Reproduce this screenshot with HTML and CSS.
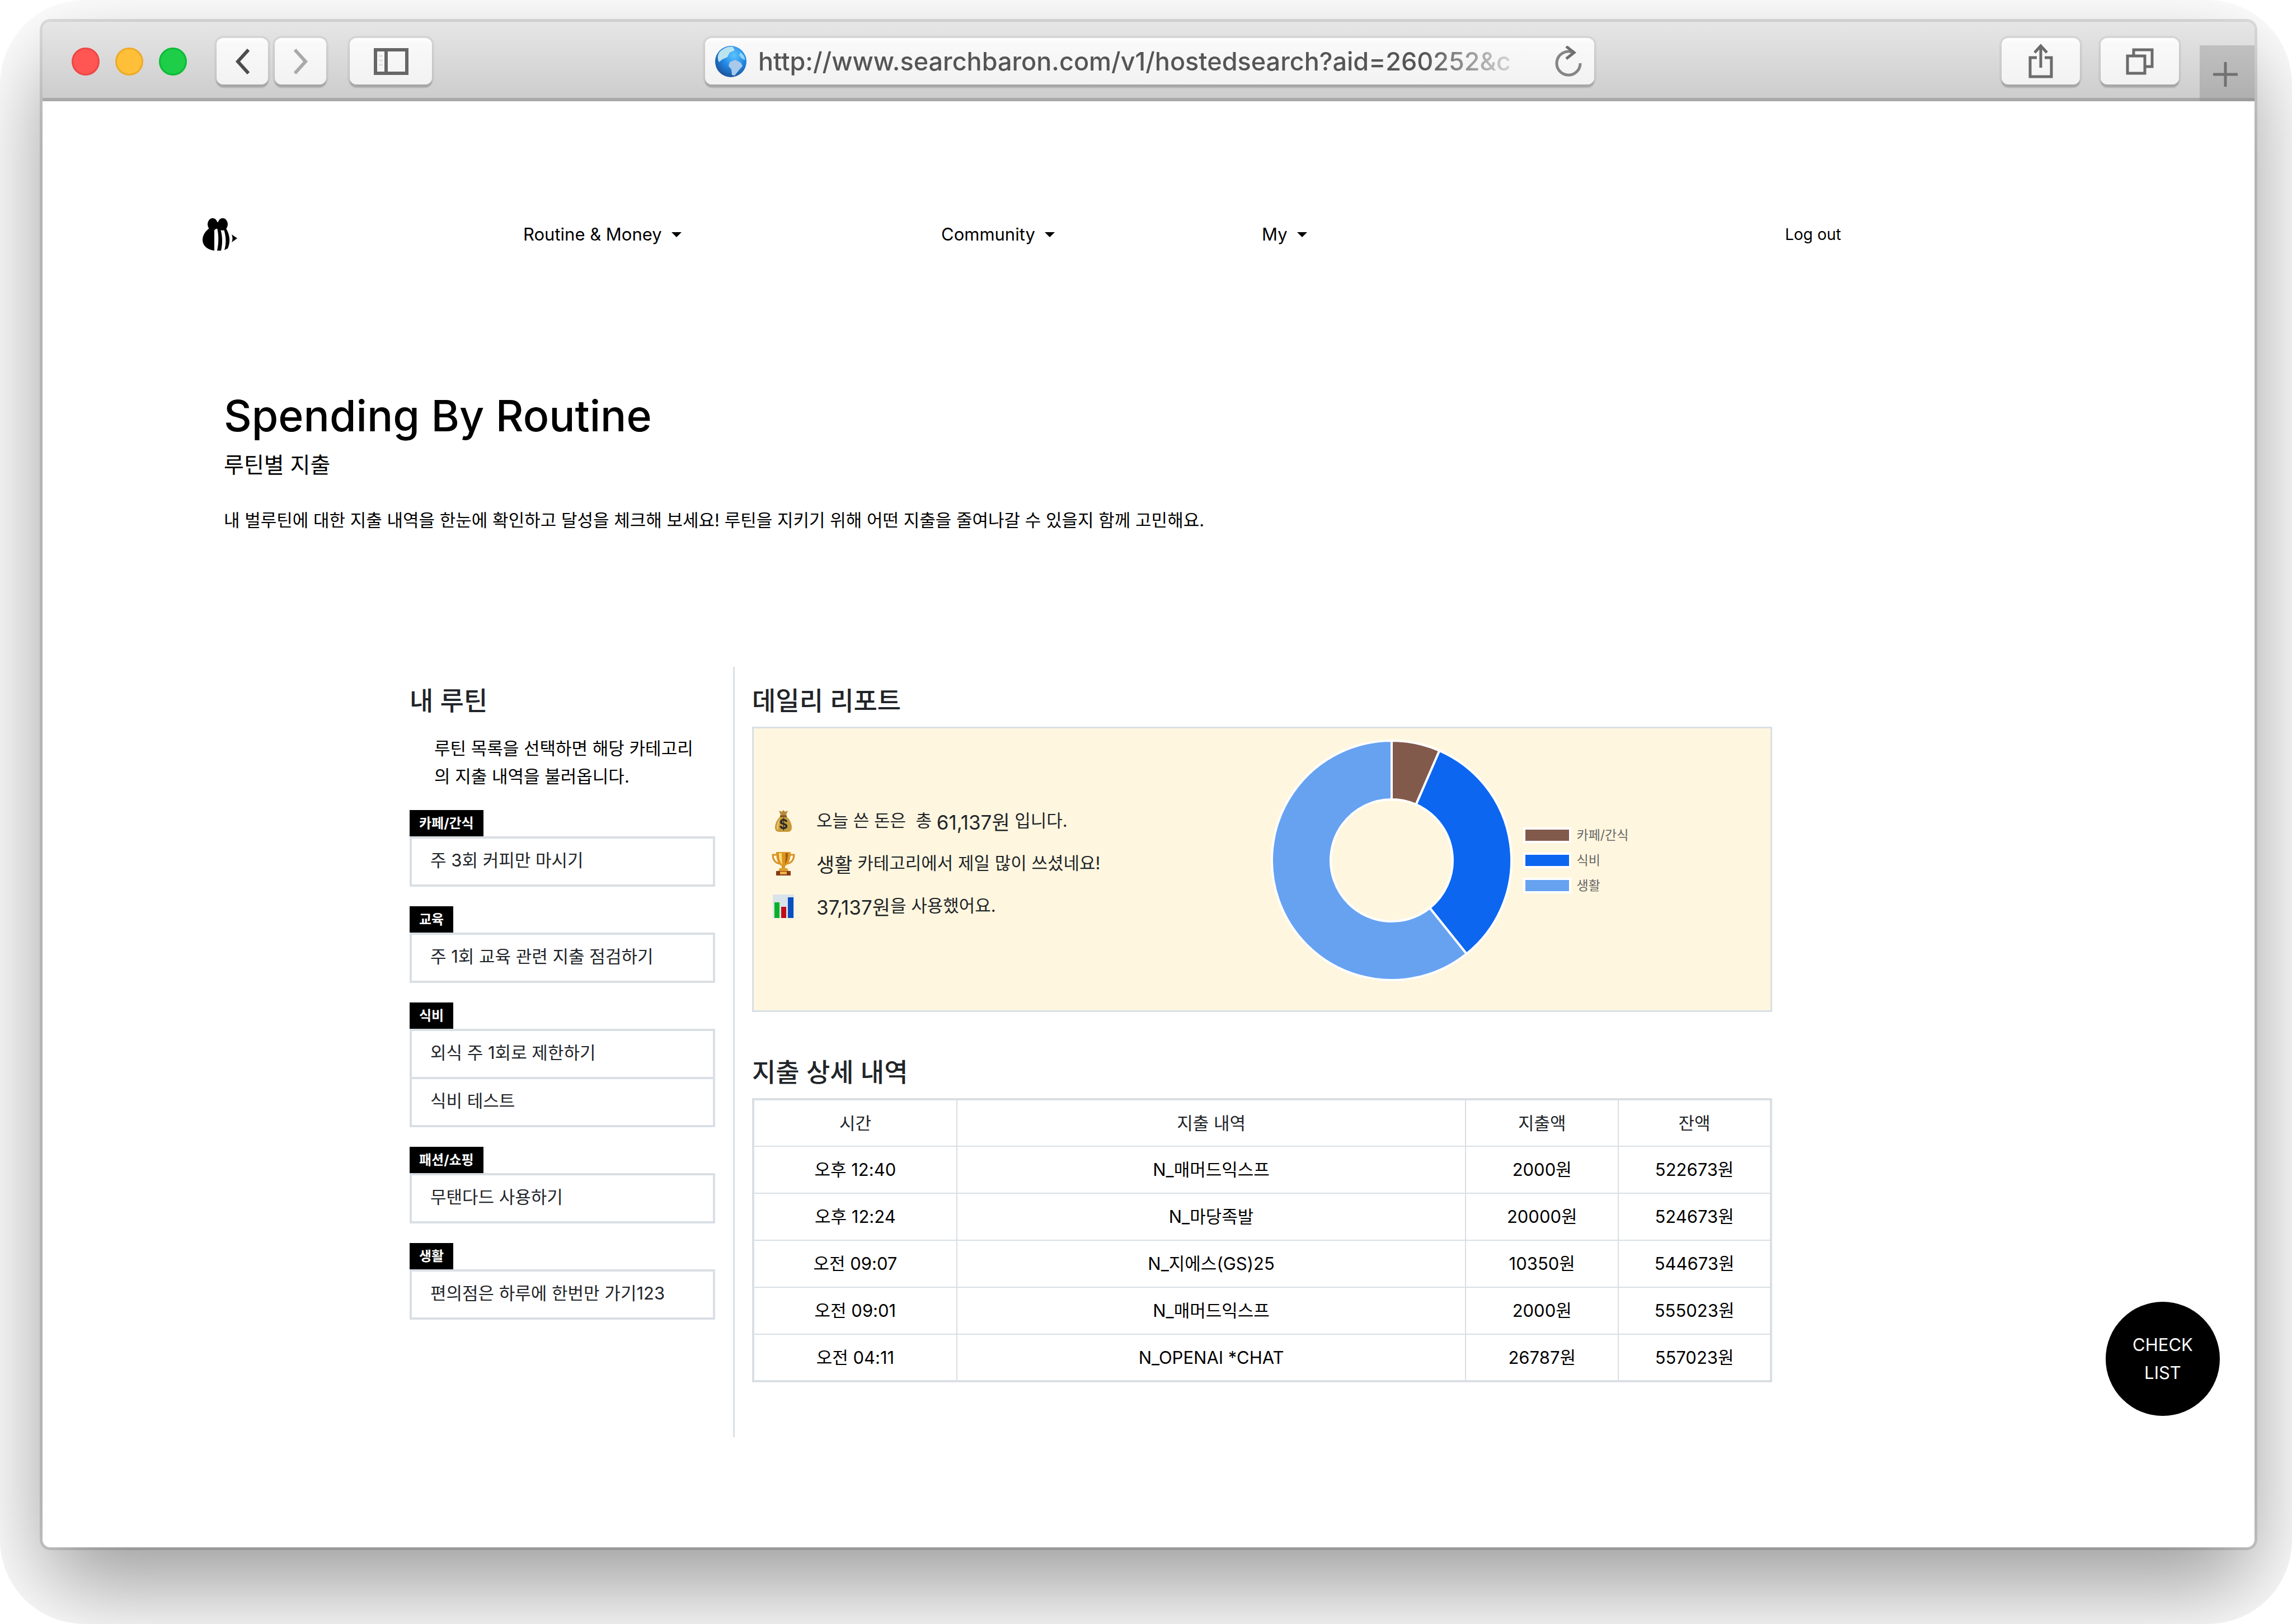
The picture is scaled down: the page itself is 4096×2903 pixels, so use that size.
FILE: index.html
```html
<!DOCTYPE html>
<html lang="ko">
<head>
<meta charset="utf-8">
<title>Spending By Routine</title>
<link rel="stylesheet" href="styles.css">
</head>
<body>
<div class="desktop">
<div class="window">
  <header class="toolbar">
    <div class="toolbar-left">
      <div class="lights">
        <span class="light light-close"></span>
        <span class="light light-min"></span>
        <span class="light light-max"></span>
      </div>
      <div class="history">
        <button class="tool tool-narrow" aria-label="Back"><svg width="29" height="48" viewBox="0 0 29 48"><path d="M25 3 6 24l19 21" fill="none" stroke="#4c4c4c" stroke-width="6"/></svg></button>
        <button class="tool tool-narrow" aria-label="Forward"><svg width="29" height="48" viewBox="0 0 29 48"><path d="M4 3l19 21L4 45" fill="none" stroke="#a9a9a9" stroke-width="6"/></svg></button>
      </div>
      <button class="tool tool-sidebar" aria-label="Sidebar"><svg width="62" height="48" viewBox="0 0 62 48"><path d="M3 3h56v42H3zM22 3v42" fill="none" stroke="#666" stroke-width="6"/><path d="M9 14h7M9 22h7M9 30h7" stroke="#ddd" stroke-width="3"/></svg></button>
    </div>
    <div class="address">
      <svg class="globe" width="58" height="58" viewBox="0 0 58 58">
        <defs><radialGradient id="sea" cx=".6" cy=".3" r=".75"><stop offset="0" stop-color="#5cc4ff"/><stop offset=".5" stop-color="#2389e6"/><stop offset="1" stop-color="#1c4f95"/></radialGradient></defs>
        <circle cx="29" cy="29" r="28" fill="url(#sea)"/>
        <path d="M9 12C16 4 27 1 33 3l3 6-9 4-4 8-9 4-6 5c-3-6-3-12 1-18z" fill="#b9e4ee"/>
        <path d="M27 30l10-4 10 5 3 6-7 8-7 9-5-1-1-10-5-6z" fill="#a9c9ea"/>
        <path d="M46 12l6 6 3 8-6-2-5-6z" fill="#8ed6f5"/>
      </svg>
      <input class="url" type="text" aria-label="Address" value="http://www.searchbaron.com/v1/hostedsearch?aid=260252&amp;c">
      <button class="reload" aria-label="Reload"><svg width="50" height="56" viewBox="0 0 50 56"><path d="M30 11A21 21 0 1 0 45 31" fill="none" stroke="#858585" stroke-width="5"/><path d="M20 1l14 11-14 11" fill="none" stroke="#6e6e6e" stroke-width="5"/></svg></button>
    </div>
    <div class="toolbar-right">
      <button class="tool tool-wide" aria-label="Share"><svg width="46" height="66" viewBox="0 0 46 66"><path d="M16 26H4v34h38V26H30" fill="none" stroke="#6b6b6b" stroke-width="5"/><path d="M23 44V6M12 17 23 5l11 12" fill="none" stroke="#6b6b6b" stroke-width="5"/></svg></button>
      <button class="tool tool-wide" aria-label="Tabs"><svg width="50" height="48" viewBox="0 0 50 48"><path d="M3 14h31v31H3zM14 14V3h33v30H34" fill="none" stroke="#6b6b6b" stroke-width="5"/></svg></button>
      <button class="new-tab" aria-label="New tab"><svg width="44" height="44" viewBox="0 0 44 44"><path d="M22 0v44M0 22h44" stroke="#717171" stroke-width="5"/></svg></button>
    </div>
  </header>

  <div class="page">
    <nav class="nav">
      <a class="logo" href="#" aria-label="Home"><svg width="64" height="60" viewBox="0 0 64 60">
        <ellipse cx="19" cy="12" rx="9" ry="11"/><ellipse cx="37" cy="12" rx="9" ry="11"/>
        <path d="M19 8h18l7 12H12z"/>
        <path d="M12 18h10v41C8 57 1 49 1 40 1 32 6 24 12 20z"/>
        <path d="M27 18h5c5 13 5 29 2 41h-7c3-13 3-28 0-41z"/>
        <path d="M38 18l6 3c6 11 7 23 2 34l-6 3c4-13 3-26-2-40z"/>
        <path d="M53 30l10 7-10 7c2-5 2-9 0-14z"/>
      </svg></a>
      <a class="nav-link" href="#">Routine &amp; Money<span class="caret"></span></a>
      <a class="nav-link" href="#">Community<span class="caret"></span></a>
      <a class="nav-link" href="#">My<span class="caret"></span></a>
      <a class="logout" href="#">Log out</a>
    </nav>

    <section class="intro">
      <h1>Spending By Routine</h1>
      <p class="subtitle">루틴별 지출</p>
      <p class="lead">내 벌루틴에 대한 지출 내역을 한눈에 확인하고 달성을 체크해 보세요! 루틴을 지키기 위해 어떤 지출을 줄여나갈 수 있을지 함께 고민해요.</p>
    </section>

    <main class="columns">
      <aside class="routines">
        <h2>내 루틴</h2>
        <p class="hint">루틴 목록을 선택하면 해당 카테고리의 지출 내역을 불러옵니다.</p>
        <section class="group"><h3>카페/간식</h3><ul><li>주 3회 커피만 마시기</li></ul></section>
        <section class="group"><h3>교육</h3><ul><li>주 1회 교육 관련 지출 점검하기</li></ul></section>
        <section class="group"><h3>식비</h3><ul><li>외식 주 1회로 제한하기</li><li>식비 테스트</li></ul></section>
        <section class="group"><h3>패션/쇼핑</h3><ul><li>무탠다드 사용하기</li></ul></section>
        <section class="group"><h3>생활</h3><ul><li>편의점은 하루에 한번만 가기123</li></ul></section>
      </aside>

      <div class="details">
        <h2>데일리 리포트</h2>
        <section class="report">
          <ul class="facts">
            <li>
              <svg class="emoji" width="44" height="44" viewBox="0 0 44 44">
                <path d="M14 3l5 2 3-3 3 3 5-2-4 10h-8z" fill="#b98a3c"/>
                <path d="M17 13h10c6 5 10 13 10 20 0 6-3 8-8 8H15c-5 0-8-2-8-8 0-7 4-15 10-20z" fill="#c79a3a"/>
                <path d="M17 16c-4 4-7 11-7 17 0 3 1 5 3 5 0-8 1-15 4-22z" fill="#e8c565"/>
                <path d="M16 13h12" stroke="#7d4f1d" stroke-width="3"/>
                <text x="22" y="36" text-anchor="middle" class="dollar">$</text>
              </svg>
              <span>오늘 쓴 돈은 &nbsp;총 <strong>61,137원</strong> 입니다.</span>
            </li>
            <li>
              <svg class="emoji" width="44" height="44" viewBox="0 0 44 44">
                <path d="M11 6H3c0 9 4 14 12 16M33 6h8c0 9-4 14-12 16" fill="none" stroke="#d5922c" stroke-width="3"/>
                <path d="M9 1h26c0 14-4 22-10 25v4h-6v-4C13 23 9 15 9 1z" fill="#dd9420"/>
                <path d="M14 3h5c0 9 0 16 2 21-5-4-7-11-7-21z" fill="#ffdf7a"/>
                <path d="M26 3h4c0 9-2 16-5 20 1-6 1-12 1-20z" fill="#9c5a10"/>
                <path d="M15 30h14l2 5H13z" fill="#e0a02b"/>
                <path d="M9 35h26v8H9z" fill="#8a3912"/><path d="M16 36h12v5H16z" fill="#e9b24a"/>
              </svg>
              <span><strong>생활</strong> 카테고리에서 제일 많이 쓰셨네요!</span>
            </li>
            <li>
              <svg class="emoji" width="44" height="44" viewBox="0 0 44 44">
                <path d="M3 1h38v42H3z" fill="#d9e3ea"/>
                <path d="M6 15h9v28H6z" fill="#08b226"/><path d="M18 23h9v20h-9z" fill="#c00d18"/><path d="M30 6h10v37H30z" fill="#0a4fc0"/>
              </svg>
              <span><strong>37,137원</strong>을 사용했어요.</span>
            </li>
          </ul>
          <div class="chart">
            <svg class="donut" width="434" height="434" viewBox="-217 -217 434 434" role="img" aria-label="카테고리별 지출">
              <g stroke="#fff" stroke-width="4" stroke-linejoin="round">
                <path fill="#825a4c" d="M0-214A214 214 0 0 1 85.5-196.2L43.6-99.9A109 109 0 0 0 0-109z"/>
                <path fill="#0c66f0" d="M85.5-196.2A214 214 0 0 1 133.8 167L68.1 85.1A109 109 0 0 0 43.6-99.9z"/>
                <path fill="#67a2f1" d="M133.8 167A214 214 0 1 1 0-214V-109A109 109 0 1 0 68.1 85.1z"/>
              </g>
            </svg>
            <ul class="legend">
              <li><span class="swatch swatch-cafe"></span>카페/간식</li>
              <li><span class="swatch swatch-food"></span>식비</li>
              <li><span class="swatch swatch-life"></span>생활</li>
            </ul>
          </div>
        </section>

        <h2>지출 상세 내역</h2>
        <table class="ledger">
          <thead>
            <tr><th class="col-time">시간</th><th class="col-item">지출 내역</th><th class="col-sum">지출액</th><th class="col-sum">잔액</th></tr>
          </thead>
          <tbody>
            <tr><td>오후 12:40</td><td>N_매머드익스프</td><td>2000원</td><td>522673원</td></tr>
            <tr><td>오후 12:24</td><td>N_마당족발</td><td>20000원</td><td>524673원</td></tr>
            <tr><td>오전 09:07</td><td>N_지에스(GS)25</td><td>10350원</td><td>544673원</td></tr>
            <tr><td>오전 09:01</td><td>N_매머드익스프</td><td>2000원</td><td>555023원</td></tr>
            <tr><td>오전 04:11</td><td>N_OPENAI *CHAT</td><td>26787원</td><td>557023원</td></tr>
          </tbody>
        </table>
      </div>
    </main>
  </div>
  <button class="checklist">CHECK<br>LIST</button>
</div>
</div>
</body>
</html>
```
FILE: styles.css
```css
* { box-sizing: border-box; margin: 0; padding: 0; }

body {
  background: #fff;
  color: #000;
  font-family: Inter, "Noto Sans CJK KR", sans-serif;
  font-size: 31px;
  line-height: 50px;
}

ul { list-style: none; }
a { color: inherit; text-decoration: none; }
button, input { font: inherit; border: 0; background: none; }
svg { display: block; flex: none; }

.desktop {
  display: flex;
  min-height: 100vh;
  padding: 39px 67px 137px 76px;
  border-radius: 150px;
  overflow: hidden;
}

.window {
  position: relative;
  flex: 1;
  display: flex;
  flex-direction: column;
  border-radius: 14px;
  background: #fff;
  box-shadow: 0 0 0 5px rgba(0, 0, 0, .12), 0 70px 166px rgba(0, 0, 0, .4);
}

/* Browser toolbar */
.toolbar {
  display: grid;
  grid-template-columns: auto 488fr 1589fr 728fr auto;
  align-items: start;
  height: 142px;
  padding: 29px 0 0 52px;
  border-bottom: 6px solid #a9a9a9;
  border-radius: 14px 14px 0 0;
  background: linear-gradient(#e6e6e6, #cdcdcd);
}

.toolbar-left, .lights, .history, .toolbar-right { display: flex; }
.toolbar-left { grid-column: 1; align-items: center; }
.toolbar-right { grid-column: 5; gap: 37px; }

.lights { gap: 28px; margin-right: 53px; }
.light { width: 50px; height: 50px; border-radius: 50%; border: 3px solid; }
.light-close { background: #ff5653; border-color: #ee4644; }
.light-min { background: #ffbf39; border-color: #eeaa25; }
.light-max { background: #1ecd48; border-color: #0cbb36; }

.history { gap: 12px; margin-right: 42px; }

.tool, .address {
  display: flex;
  align-items: center;
  justify-content: center;
  height: 83px;
  border-radius: 12px;
  background: linear-gradient(#fff, #f9f9f9 12%, #f2f2f2);
  box-shadow: 0 0 0 4px rgba(0, 0, 0, .05), 0 6px 2px rgba(0, 0, 0, .16);
}
.tool-narrow { width: 92px; }
.tool-sidebar { width: 147px; }
.tool-wide { width: 140px; }

.address { grid-column: 3; justify-content: flex-start; padding: 0 20px 0 17px; }
.url {
  flex: 1;
  min-width: 0;
  height: 70px;
  margin: 0 40px 0 20px;
  color: #555;
  font-size: 45px;
  font-weight: 500;
  line-height: 70px;
  outline: 0;
  mask-image: linear-gradient(to right, #000 86%, transparent);
}
.reload { margin-left: auto; }

.new-tab {
  display: flex;
  align-items: center;
  justify-content: center;
  width: 98px;
  height: 100px;
  margin-top: 13px;
  padding: 10px 6px 0 0;
  border-bottom: 6px solid #9d9d9d;
  background: linear-gradient(#c0c0c0, #b0b0b0);
}

/* Site navigation */
.page { flex: 1; padding-top: 208px; }

.nav {
  display: grid;
  grid-template-columns: 574fr 747fr 573fr 935fr 839fr;
  align-items: center;
  height: 60px;
  padding-left: 285px;
}
.nav-link { display: flex; align-items: center; gap: 17px; }
.caret { border: 9px solid transparent; border-top-color: #000; border-bottom: 0; }
.logout { font-size: 28px; }

/* Intro */
.intro { margin-top: 244px; padding-left: 324px; }
h1 { font-size: 77px; font-weight: 500; line-height: 100px; }
.subtitle { margin-top: 13px; font-size: 39px; }
.lead { margin-top: 49px; }

/* Two columns */
.columns {
  display: grid;
  grid-template-columns: 578fr 1857fr;
  margin-top: 237px;
  padding: 0 862px 0 656px;
}
.routines { padding: 30px 32px 98px 0; }
.details { padding: 30px 0 98px 31px; border-left: 3px solid #dbe0e5; }

h2 { color: #212529; font-size: 46px; font-weight: 500; line-height: 60px; }

.hint { margin-top: 31px; padding: 0 20px 0 44px; word-break: break-all; }

.group { margin-top: 35px; }
.group h3 {
  width: max-content;
  padding: 0 17px;
  background: #000;
  color: #fff;
  font-size: 24px;
  font-weight: 700;
  line-height: 47px;
}
.group ul { border: 4px solid #d9dfe4; color: #212529; }
.group li { height: 82px; padding: 0 33px; line-height: 78px; }
.group li + li { height: 86px; border-top: 4px solid #d9dfe4; }

/* Daily report */
.report {
  display: grid;
  grid-template-columns: 50% 50%;
  height: 510px;
  margin: 17px 0 77px;
  border: 3px solid #d9dfe6;
  background: #fff6df;
  color: #212529;
}
.facts { align-self: center; padding: 0 0 20px 31px; }
.facts li { display: flex; align-items: center; gap: 37px; height: 76px; }
.facts strong { font-size: 35px; font-weight: 400; vertical-align: middle; }
.dollar { fill: #2a2a2a; font: 700 24px Inter, sans-serif; }

.chart { display: flex; align-items: center; align-self: start; gap: 18px; padding: 19px 0 0 14px; }
.legend { display: grid; gap: 17px; color: #666; font-size: 23px; line-height: 28px; }
.legend li { display: flex; align-items: center; gap: 10px; }
.swatch { width: 86px; height: 28px; border: 4px solid #fff; }
.swatch-cafe { background: #825a4c; }
.swatch-food { background: #0c66f0; }
.swatch-life { background: #67a2f1; }

/* Ledger */
.ledger {
  width: 100%;
  margin-top: 17px;
  table-layout: fixed;
  border: 4px solid #d9dfe4;
  border-collapse: collapse;
  text-align: center;
}
.ledger th, .ledger td { height: 84px; border: 2px solid #d9dfe4; font-weight: 400; }
.ledger th { color: #212529; }
.col-time { width: 20%; }
.col-item { width: 50%; }
.col-sum { width: 15%; }

.checklist {
  position: absolute;
  right: 62px;
  bottom: 235px;
  width: 204px;
  height: 204px;
  border-radius: 50%;
  background: #000;
  color: #fff;
}
```
